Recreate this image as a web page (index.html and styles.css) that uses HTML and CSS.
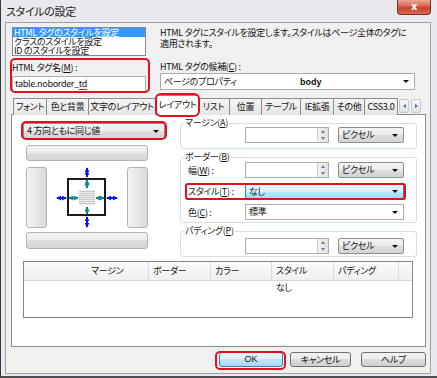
FILE: index.html
```html
<!DOCTYPE html>
<html lang="ja">
<head>
  <meta charset="UTF-8">
  <title>スタイルの設定</title>
  <link rel="stylesheet" href="styles.css">
</head>
<body>
  <div class="window">
    <div class="titlebar">
      <span class="title">スタイルの設定</span>
      <span class="close">x</span>
    </div>

    <div class="client">
      <div class="top">
        <div class="col-left">
          <ul class="listbox">
            <li class="sel">HTML タグのスタイルを設定</li>
            <li>クラスのスタイルを設定</li>
            <li>ID のスタイルを設定</li>
          </ul>
          <div class="tagname mark">
            <label>HTML タグ名(<u>M</u>) :</label>
            <div class="textbox">table.noborder_<span class="err">td</span></div>
          </div>
        </div>
        <div class="col-right">
          <p class="desc">HTML タグにスタイルを設定します。スタイルはページ全体のタグに<br>適用されます。</p>
          <label>HTML タグの候補(<u>C</u>) :</label>
          <div class="combo edit wide">
            <span class="val page">ページのプロパティ</span>
            <b class="tag">body</b>
            <i class="arrow"></i>
          </div>
        </div>
      </div>

      <div class="tabs">
        <span class="tab w34">フォント</span>
        <span class="tab w43">色と背景</span>
        <span class="tab w68">文字のレイアウト</span>
        <span class="tab active mark">レイアウト</span>
        <span class="tab w33">リスト</span>
        <span class="tab w33">位置</span>
        <span class="tab w40">テーブル</span>
        <span class="tab w34">IE拡張</span>
        <span class="tab w32">その他</span>
        <span class="tab w34">CSS3.0</span>
        <span class="scroll"><i class="tri left"></i></span>
        <span class="scroll"><i class="tri right"></i></span>
      </div>

      <div class="panel">
        <div class="panel-main">
          <div class="left-area">
            <div class="combo btn sides mark">
              <span class="val">4 方向ともに同じ値</span>
              <i class="arrow"></i>
            </div>
            <div class="box-grid">
              <div class="bar h16"></div>
              <div class="mid">
                <div class="bar vert"></div>
                <svg class="diagram" width="80" height="61" viewBox="0 0 80 61">
                  <defs>
                    <marker id="hb" viewBox="0 0 6 6" markerWidth="5" markerHeight="5" refX="5" refY="3" orient="auto-start-reverse" markerUnits="userSpaceOnUse">
                      <path d="M0,0 L6,3 L0,6 z" fill="#0a14e6"/>
                    </marker>
                    <marker id="ht" viewBox="0 0 6 6" markerWidth="5" markerHeight="5" refX="5" refY="3" orient="auto-start-reverse" markerUnits="userSpaceOnUse">
                      <path d="M0,0 L6,3 L0,6 z" fill="#108a8a"/>
                    </marker>
                    <pattern id="stripes" width="4" height="2" patternUnits="userSpaceOnUse">
                      <rect width="4" height="1" fill="#c9c9c9"/>
                      <rect y="1" width="4" height="1" fill="#ececec"/>
                    </pattern>
                  </defs>
                  <rect x="32" y="23" width="16" height="15" fill="url(#stripes)"/>
                  <rect x="21" y="12" width="37" height="36" fill="none" stroke="#1c1c1c" stroke-width="2"/>
                  <g stroke="#0a14e6" stroke-width="2" marker-start="url(#hb)" marker-end="url(#hb)">
                    <line x1="40" y1="1" x2="40" y2="10"/>
                    <line x1="40" y1="50" x2="40" y2="60"/>
                    <line x1="10" y1="31" x2="19" y2="31"/>
                    <line x1="60" y1="31" x2="70" y2="31"/>
                  </g>
                  <g stroke="#108a8a" stroke-width="2" marker-start="url(#ht)" marker-end="url(#ht)">
                    <line x1="40" y1="13" x2="40" y2="21"/>
                    <line x1="40" y1="40" x2="40" y2="47"/>
                    <line x1="22" y1="31" x2="31" y2="31"/>
                    <line x1="49" y1="31" x2="57" y2="31"/>
                  </g>
                </svg>
                <div class="bar vert"></div>
              </div>
              <div class="bar h17"></div>
            </div>
          </div>

          <div class="right-area">
            <fieldset class="group">
              <legend>マージン(<u>A</u>)</legend>
              <div class="row first">
                <span class="lbl"></span>
                <div class="spin"><span class="field"></span><span class="updown"><i class="tri up"></i><i class="tri down"></i></span></div>
                <div class="combo btn unit"><span class="val">ピクセル</span><i class="arrow"></i></div>
              </div>
            </fieldset>

            <fieldset class="group">
              <legend>ボーダー(<u>B</u>)</legend>
              <div class="row">
                <span class="lbl">幅(<u>W</u>) :</span>
                <div class="spin"><span class="field"></span><span class="updown"><i class="tri up"></i><i class="tri down"></i></span></div>
                <div class="combo btn unit"><span class="val">ピクセル</span><i class="arrow"></i></div>
              </div>
              <div class="row style mark">
                <span class="lbl">スタイル(<u>T</u>) :</span>
                <div class="combo hot long"><span class="val">なし</span><i class="arrow"></i></div>
              </div>
              <div class="row color">
                <span class="lbl">色(<u>C</u>) :</span>
                <div class="combo edit long"><span class="val">標準</span><i class="arrow"></i></div>
              </div>
            </fieldset>

            <fieldset class="group">
              <legend>パディング(<u>P</u>)</legend>
              <div class="row pad">
                <span class="lbl"></span>
                <div class="spin"><span class="field"></span><span class="updown"><i class="tri up"></i><i class="tri down"></i></span></div>
                <div class="combo btn unit"><span class="val">ピクセル</span><i class="arrow"></i></div>
              </div>
            </fieldset>
          </div>
        </div>

        <div class="listview">
          <div class="lv-head">
            <span class="c0"></span>
            <span class="c1">マージン</span>
            <span class="c1">ボーダー</span>
            <span class="c2">カラー</span>
            <span class="c1">スタイル</span>
            <span class="c3">パディング</span>
            <span class="rest"></span>
          </div>
          <div class="lv-row">
            <span class="c0"></span>
            <span class="c1"></span>
            <span class="c1"></span>
            <span class="c2"></span>
            <span class="c1">なし</span>
            <span class="c3"></span>
          </div>
        </div>
      </div>

      <div class="buttons">
        <span class="button default mark">OK</span>
        <span class="button cancel">キャンセル</span>
        <span class="button help">ヘルプ</span>
      </div>
    </div>
  </div>
</body>
</html>
```

FILE: styles.css
```css
* {
  box-sizing: border-box;
}

body {
  margin: 0;
  font-family: "Noto Sans CJK JP", "Noto Sans", sans-serif;
  font-size: 9px;
  letter-spacing: -0.3px;
  font-feature-settings: "palt";
  color: #111;
  background: #fff;
}

u {
  text-decoration: underline;
  text-underline-offset: 1px;
}

.window {
  width: 437px;
  height: 378px;
  background: #e7e9ec;
  border-left: 1px solid #3a3a3a;
  border-bottom: 2px solid #4e4e4e;
  display: flex;
  flex-direction: column;
}

/* title bar */
.titlebar {
  height: 22px;
  display: flex;
  align-items: flex-start;
}

.titlebar .title {
  padding: 4px 0 0 5px;
  font-size: 11px;
  line-height: 14px;
  color: #1a1a1a;
}

.titlebar .close {
  margin-left: auto;
  margin-right: 6px;
  width: 34px;
  height: 15px;
  border: 1px solid #7a3224;
  border-top: none;
  border-radius: 0 0 4px 4px;
  background: linear-gradient(#eba596, #d5684f 45%, #c5432a 55%, #d86a4f);
  color: #fff;
  font-family: "DejaVu Sans", sans-serif;
  font-weight: bold;
  font-size: 10px;
  line-height: 13px;
  text-align: center;
}

/* client area */
.client {
  margin: 0 6px 0 4px;
  height: 352px;
  background: #f0f0f0;
  border: 1px solid #9ea3a8;
}

.top {
  display: flex;
  gap: 14px;
  padding: 4px 0 0 6px;
}

.col-left {
  width: 134px;
}

.listbox {
  margin: 0;
  padding: 0;
  list-style: none;
  height: 29px;
  background: #fff;
  border: 1px solid #828790;
}

.listbox li {
  height: 9px;
  line-height: 9px;
  padding-left: 1px;
  white-space: nowrap;
}

.listbox li.sel {
  background: #3399ff;
  color: #fff;
}

.tagname {
  margin-top: 6px;
}

label {
  display: block;
  line-height: 12px;
}

.textbox {
  margin-top: 2px;
  height: 16px;
  background: #fff;
  border: 1px solid #abadb3;
  padding-left: 2px;
  line-height: 14px;
}

.textbox .err {
  text-decoration: underline;
  text-decoration-color: #e0101a;
  text-decoration-thickness: 1px;
  text-underline-offset: 2px;
}

.col-right {
  width: 255px;
}

.desc {
  margin: 0 0 12px;
  line-height: 11px;
  white-space: nowrap;
}

/* combos */
.combo {
  position: relative;
  display: flex;
  align-items: center;
  height: 16px;
  border: 1px solid #a7a7a7;
  border-radius: 2px;
  padding-left: 3px;
  line-height: 14px;
  white-space: nowrap;
}

.combo .arrow {
  margin-left: auto;
  margin-right: 5px;
  width: 0;
  height: 0;
  border-left: 3px solid transparent;
  border-right: 3px solid transparent;
  border-top: 3px solid #111;
}

.combo.edit {
  background: #fff;
  border-color: #abadb3;
  border-radius: 0;
}

.combo.wide {
  height: 17px;
}

.combo .page {
  width: 136px;
}

.combo .tag {
  font-family: "Liberation Sans", sans-serif;
  letter-spacing: 0;
}

.combo.btn {
  background: linear-gradient(#f3f3f3, #ececec 50%, #dedede 50%, #d3d3d3);
  border-color: #8e8e8e;
}

.combo.hot {
  background: linear-gradient(#eaf6fd, #d9f0fc 50%, #bee6fd 50%, #a7d9f5);
  border-color: #3c7fb1;
  height: 15px;
}

.combo.sides {
  width: 142px;
}

.combo.unit {
  width: 66px;
  margin-left: 9px;
}

.combo.long {
  width: 159px;
}

/* tabs */
.tabs {
  display: flex;
  align-items: flex-end;
  height: 20px;
  margin: 3px 0 0 7px;
  width: 412px;
}

.tab {
  height: 17px;
  margin-right: -1px;
  border: 1px solid #898c95;
  border-bottom: none;
  background: linear-gradient(#f4f4f4, #e6e6e6);
  text-align: center;
  line-height: 16px;
  white-space: nowrap;
}

.w32 { width: 32px; }
.w33 { width: 33px; }
.w34 { width: 34px; }
.w40 { width: 40px; }
.w43 { width: 43px; }
.w68 { width: 68px; }

.tab.active {
  position: relative;
  z-index: 1;
  width: 43px;
  height: 20px;
  margin-left: 1px;
  margin-right: -2px;
  background: #fff;
  line-height: 18px;
}

.scroll {
  display: flex;
  align-items: center;
  justify-content: center;
  width: 10px;
  height: 14px;
  margin: 0 0 2px 2px;
  border: 1px solid #c6c8cc;
  border-radius: 2px;
  background: linear-gradient(#f6f6f6, #e3e3e3);
}

.scroll:first-of-type {
  margin-left: auto;
}

.tri {
  width: 0;
  height: 0;
  border: 2px solid transparent;
}

.tri.left {
  border-right: 3px solid #4b6ea8;
  border-left: none;
}

.tri.right {
  border-left: 3px solid #4b6ea8;
  border-right: none;
}

.tabs .scroll + .scroll {
  margin-left: 2px;
  margin-right: 1px;
}

/* tab panel */
.panel {
  width: 415px;
  height: 233px;
  margin: -1px 0 0 5px;
  background: #fff;
  border: 1px solid #898c95;
}

.panel-main {
  display: flex;
}

.left-area {
  width: 168px;
  padding: 8px 0 0 11px;
}

.box-grid {
  width: 122px;
  margin: 6px 0 0 3px;
}

.bar {
  border: 1px solid #b3b3b3;
  border-radius: 3px;
  background: linear-gradient(#f4f4f4, #ebebeb 50%, #dedede 50%, #d6d6d6);
}

.bar.h16 {
  height: 16px;
}

.bar.h17 {
  height: 17px;
}

.mid {
  display: flex;
  height: 61px;
  margin: 6px 0 4px;
}

.bar.vert {
  width: 21px;
  background: linear-gradient(90deg, #f4f4f4, #e6e6e6 50%, #dadada);
}

.diagram {
  display: block;
}

.right-area {
  width: 237px;
  padding-top: 3px;
}

.group {
  margin: 0;
  padding: 0 4px 0 3px;
  border: 1px solid #d5dfe5;
  border-radius: 3px;
  min-width: 0;
}

.group + .group {
  margin-top: 3px;
}

.group legend {
  padding: 0 1px;
  line-height: 10px;
  color: #1a1a1a;
}

.row {
  display: flex;
  align-items: center;
  height: 16px;
  margin-top: 0;
}

.row.first {
  margin-top: -1px;
  margin-bottom: 5px;
}

.row.style {
  position: relative;
  width: 220px;
  height: 15px;
  margin-top: 6px;
}

.row.color {
  margin-top: 5px;
  margin-bottom: 2px;
}

.row.pad {
  margin-top: 2px;
  margin-bottom: 2px;
}

.lbl {
  width: 61px;
  padding-left: 4px;
  white-space: nowrap;
}

.spin {
  display: flex;
  width: 84px;
  height: 16px;
  border: 1px solid #abadb3;
  background: #fff;
}

.spin .field {
  flex: 1;
}

.updown {
  width: 11px;
  display: flex;
  flex-direction: column;
  align-items: center;
  justify-content: space-around;
  background: linear-gradient(90deg, #f2f2f2, #e2e2e2);
  border-left: 1px solid #d0d0d0;
}

.tri.up {
  border-bottom: 3px solid #5d7fae;
  border-top: none;
}

.tri.down {
  border-top: 3px solid #5d7fae;
  border-bottom: none;
}

/* listview */
.listview {
  width: 390px;
  height: 57px;
  margin: 4px 0 0 11px;
  border: 1px solid #828790;
}

.lv-head,
.lv-row {
  display: flex;
}

.lv-head {
  height: 19px;
  line-height: 18px;
  background: linear-gradient(#fbfbfb, #f0f0f0);
  border-bottom: 1px solid #d5d5d5;
}

.lv-head span {
  padding-left: 4px;
  border-right: 1px solid #dcdcdc;
  white-space: nowrap;
}

.lv-head .c0 {
  border-right: none;
}

.lv-head .rest {
  flex: 1;
  border-right: none;
}

.lv-row {
  height: 14px;
  line-height: 14px;
}

.lv-row span {
  padding-left: 4px;
}

.c0 { width: 63px; }
.c1 { width: 62px; }
.c2 { width: 61px; }
.c3 { width: 65px; }

/* bottom buttons */
.buttons {
  display: flex;
  justify-content: flex-end;
  margin: 5px 4px 0 0;
}

.button {
  height: 15px;
  border: 1px solid #707070;
  border-radius: 3px;
  background: linear-gradient(#f2f2f2, #ebebeb 50%, #dddddd 50%, #cfcfcf);
  text-align: center;
  line-height: 13px;
  white-space: nowrap;
}

.button.default {
  position: relative;
  width: 64px;
  border-color: #3c7fb1;
  background: linear-gradient(#eaf6fd, #d9f0fc 50%, #bee6fd 50%, #a7d9f5);
  font-family: "Liberation Sans", sans-serif;
  letter-spacing: 0;
}

.button.cancel {
  width: 61px;
  margin-left: 7px;
}

.button.help {
  width: 65px;
  margin-left: 10px;
}

/* red annotation rings */
.mark {
  position: relative;
}

.mark::after {
  content: "";
  position: absolute;
  inset: -3px;
  border: 2px solid #e3111b;
  border-radius: 5px;
  pointer-events: none;
}

.tagname::after {
  inset: -4px -4px -1px -2px;
}

.tab.active::after {
  inset: -3px -2px -2px -2px;
  border-radius: 6px;
}

.combo.sides::after {
  inset: -3px -3px -2px -3px;
}

.row.style::after {
  inset: -1px -2px -1px 1px;
  border-radius: 3px;
}

.button.default::after {
  inset: -2px -4px -4px -5px;
}
```
